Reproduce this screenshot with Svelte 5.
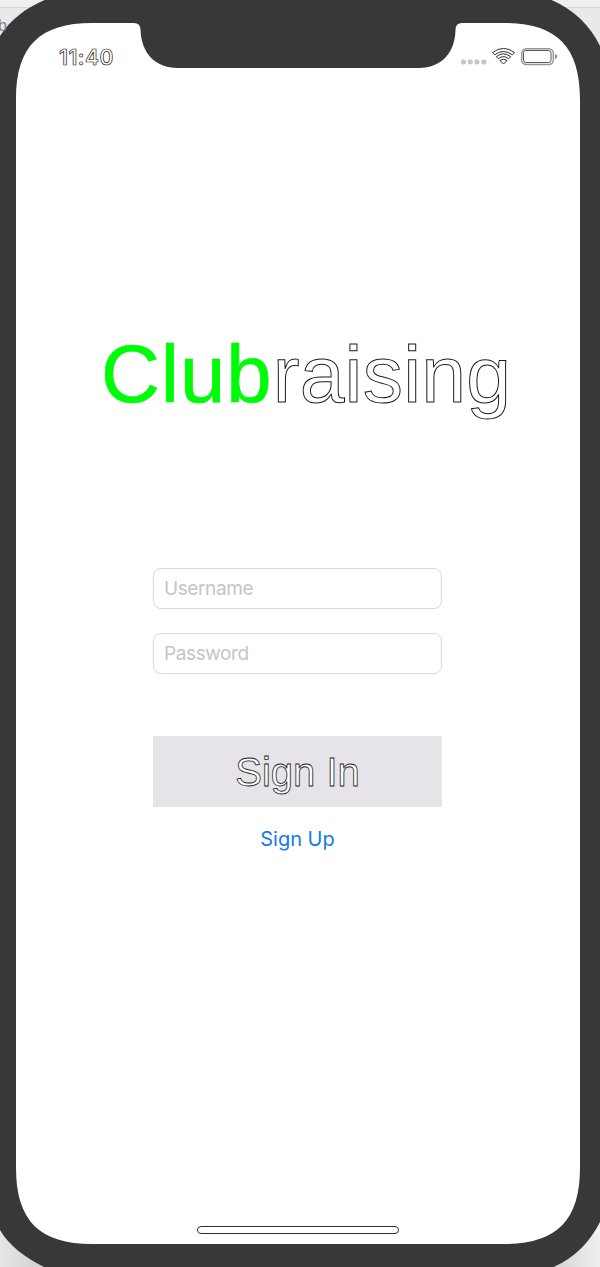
<script>
  let username = $state('');
  let password = $state('');
</script>

<div class="stage">
  <svg class="device" viewBox="0 0 600 1267" aria-hidden="true">
    <defs>
      <linearGradient id="edge" x1="0" y1="0" x2="1" y2="0">
        <stop offset="0" stop-color="#e6e5e7" /><stop offset="0.08" stop-color="#cfcdd0" />
        <stop offset="0.92" stop-color="#d2d0d3" /><stop offset="1" stop-color="#f0eff1" />
      </linearGradient>
    </defs>
    <rect width="600" height="80" fill="#e9e8ea" />
    <rect width="600" height="7" fill="#efeef0" />
    <path d="M0 7.500H600" stroke="#d4d3d5" />
    <rect y="1180" width="600" height="87" fill="url(#edge)" />
    <path d="M-12 80Q-10 52 0 36C11 19 27 7 47 -1Q65 -8 100 -8H490Q530 -8 549 -1C572 8 590 25 600 46Q610 67 612 100V1180Q608 1204 600 1222C590 1242 574 1259 551 1268Q535 1276 500 1276H95Q62 1276 46 1268C26 1258 10 1247 0 1230Q-10 1214 -12 1180Z" fill="#3a373a" />
    <path d="M16 99C16 46 40 23 92 23H134Q140.500 23 140.500 30C141.500 53 155 68 178 68H419C441 68 455 53 455.500 30Q455.500 23 462 23H504C556 23 580 46 580 99V1168C580 1221 556 1244 504 1244H92C40 1244 16 1221 16 1168Z" fill="#fff" />
  </svg>
  <span class="behind">b</span>

  <main>
    <header>
      <time>11:40</time>
      <svg class="status" width="100" height="20" viewBox="0 0 100 20" aria-label="Wi-Fi and battery">
        <g fill="#c7c5c9">
          <rect x="1" y="11.500" width="5" height="5" rx="2" /><rect x="7.700" y="11.500" width="5" height="5" rx="2" />
          <rect x="14.500" y="11.500" width="5" height="5" rx="2" /><rect x="21.300" y="11.500" width="5" height="5" rx="2" />
        </g>
        <g fill="#fff" stroke="#171717" stroke-width=".9" stroke-linejoin="round">
          <path d="M32.500 4.600Q43.500-3.800 54.500 4.600L52.300 6.800Q43.500.200 34.700 6.800Z" />
          <path d="M36.300 8.700Q43.500 3 50.700 8.700L48.700 10.700Q43.500 6.500 38.300 10.700Z" />
          <path d="M40 12.500Q43.500 9.700 47 12.500L43.500 16Z" />
        </g>
        <rect x="61.700" y=".7" width="31.600" height="15.800" rx="4.500" fill="#fff" stroke="#969496" stroke-width="1.400" />
        <rect x="63.500" y="2.500" width="27.500" height="12" rx="2.300" fill="#fff" stroke="#444" stroke-width=".9" />
        <path d="M95 6Q97 6.400 97 8.600T95 11.300Z" fill="#858385" />
      </svg>
    </header>

    <h1><span class="club">Club</span><span class="raising">raising</span></h1>

    <form onsubmit={(e) => e.preventDefault()}>
      <input type="text" placeholder="Username" bind:value={username} />
      <input type="password" placeholder="Password" bind:value={password} />
      <button class="sign-in" type="submit">Sign In</button>
      <button class="sign-up" type="button">Sign Up</button>
    </form>

    <div class="home"></div>
  </main>
</div>

<style>
  :global(body) { background: #fff; overflow: hidden; }
  .stage { position: relative; width: 600px; height: 1267px; overflow: hidden; }
  .device { position: absolute; inset: 0; width: 600px; height: 1267px; }
  .behind { position: absolute; left: -2px; top: 16px; width: 9px; font: 16px/20px "Liberation Sans", sans-serif; color: #858386; }
  main {
    position: relative; box-sizing: border-box; height: 1267px;
    padding: 48px 40px 33px 59px;
    display: flex; flex-direction: column;
  }
  header { display: flex; justify-content: space-between; height: 20px; }
  time { font: 600 21px/20px Inter, sans-serif; letter-spacing: .5px; color: #fff; -webkit-text-stroke: .7px #171717; }
  .status { display: block; overflow: visible; }
  h1 {
    margin: 258px 0 0 42px; height: 96px; white-space: nowrap;
    font: 400 82px/96px "Liberation Sans", sans-serif;
  }
  .club { color: #00fb08; letter-spacing: 1px; font-size: 81.500px; -webkit-text-stroke: .7px #00fb08; }
  .raising { color: #fff; font-size: 80.500px; letter-spacing: .2px; -webkit-text-stroke: 1px #181818; }
  form { display: flex; flex-direction: column; width: 289px; margin: 146px 0 0 94px; }
  input {
    box-sizing: border-box; width: 289px; height: 41px; margin: 0 0 24px;
    padding: 0 9px 0 10px; border: 1px solid #d9d9d9; border-radius: 8px;
    background: #fff; outline: 0; color: #222;
    font: 400 19px/39px Inter, sans-serif; letter-spacing: -.400px;
  }
  input::placeholder { color: #c5c4c8; opacity: 1; }
  button { border: 0; padding: 0; background: none; }
  .sign-in {
    height: 71px; margin-top: 38px; background: #e6e4e8; color: #fff;
    font: 400 40px/73px "Liberation Sans", sans-serif;
    -webkit-text-stroke: .8px #222;
  }
  .sign-up { align-self: center; margin-top: 20px; color: #1479ee; font: 400 20px/24px Inter, sans-serif; }
  .home {
    box-sizing: border-box; width: 202px; height: 8px;
    margin: auto 0 0 138px; border: 1px solid #303030; border-radius: 4px;
    background: #fff;
  }
</style>
